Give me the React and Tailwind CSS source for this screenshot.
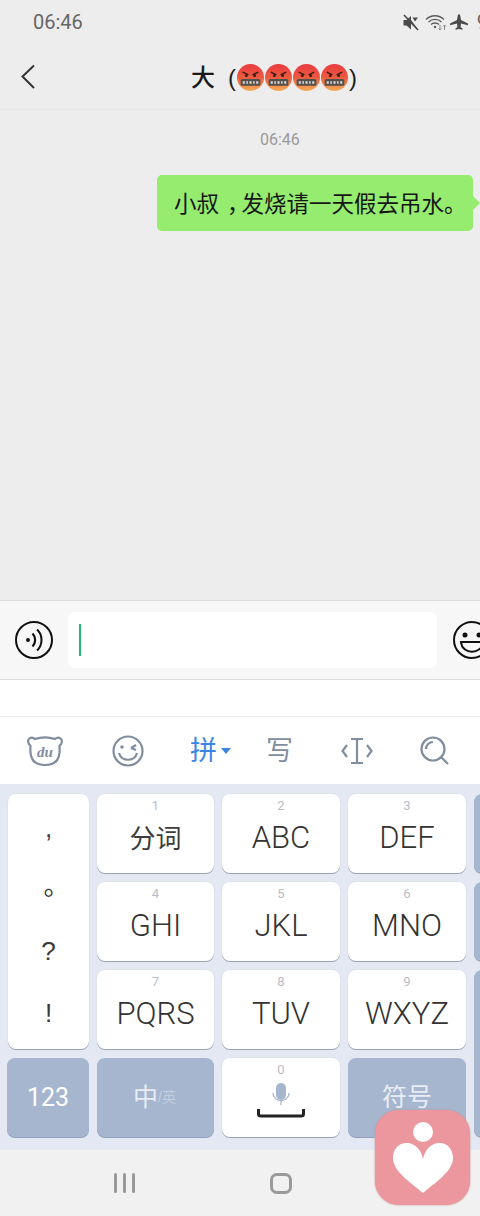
const CJK = { fontFamily: '"Liberation Sans","Noto Sans CJK SC",sans-serif' };
const ROBOTO = { fontFamily: 'Roboto,"Noto Sans CJK SC",sans-serif' };

function AngryFace({ id }) {
  return (
    <svg width="27" height="27" viewBox="0 0 26 26" className="shrink-0">
      <defs>
        <linearGradient id={id} x1="0" y1="0" x2="0" y2="1">
          <stop offset="0" stopColor="#ea3a40" />
          <stop offset="0.5" stopColor="#ec5a40" />
          <stop offset="1" stopColor="#f4ad55" />
        </linearGradient>
      </defs>
      <circle cx="13" cy="13" r="13" fill={`url(#${id})`} />
      <path d="M6 8 L10.5 10.2 M20 8 L15.5 10.2" stroke="#3d1c14" strokeWidth="1.4" strokeLinecap="round" />
      <circle cx="9" cy="11.2" r="1.4" fill="#3d1c14" />
      <circle cx="17" cy="11.2" r="1.4" fill="#3d1c14" />
      <rect x="3.5" y="14.5" width="19" height="6.5" rx="1.5" fill="#54504c" />
      <path d="M5.5 16.5 h2 v2.5 h-2z M9 16.5 h1.5 v2.5 h-1.5z M12 16.5 h2 v2.5 h-2z M15.5 16.5 h1.5 v2.5 h-1.5z M18.5 16.5 h2 v2.5 h-2z" fill="#dedad6" />
    </svg>
  );
}

function Key({ num, children }) {
  return (
    <div style={ROBOTO} className="relative flex flex-col items-center rounded-lg bg-white shadow-[0_1px_0_#98a3b8,0_0_0_1px_#dfe3ee]">
      <span className="mt-[4px] h-4 text-[13px] leading-4 text-[#b9bdc8]">{num}</span>
      <span className="mt-[6px] text-[31px] font-light leading-9 text-[#333]">{children}</span>
    </div>
  );
}

function Dark({ children, className = "" }) {
  return (
    <div className={`flex items-center justify-center rounded-lg bg-[#a6b6cf] shadow-[0_1px_0_#8f9fbb] ${className}`}>
      {children}
    </div>
  );
}

export default function App() {
  return (
    <div style={CJK} className="relative flex h-[1216px] w-[480px] flex-col overflow-hidden bg-[#ededed]">
      {/* status bar */}
      <div className="flex h-[44px] shrink-0 items-center overflow-hidden pl-[33px]">
        <span style={ROBOTO} className="text-[20px] text-[#666]">06:46</span>
        <div className="ml-[320px] flex items-center">
          <svg width="16" height="17" viewBox="0 0 16 17" fill="#4a4a4a">
            <path d="M0.5 6 h3 l4.5 -4 v4 l6 8 l-0.5 0.5 l-5.5 -5 v6 l-4.5 -4 h-3z M9.5 3.5 l5.5 0 l-3 4z" />
            <path d="M1 1 L15 16" stroke="#4a4a4a" strokeWidth="1.6" />
          </svg>
          <svg width="22" height="17" viewBox="0 0 22 17" fill="none" stroke="#5a5a5a" strokeWidth="1.3" className="ml-[6px]">
            <path d="M1 5.5 C6 0.5 14 0.5 19 5.5" />
            <path d="M3.5 8 C7 4.5 13 4.5 16.5 8" />
            <path d="M6 10.5 C8 8.5 12 8.5 14 10.5" />
            <circle cx="10" cy="13" r="1.2" fill="#5a5a5a" stroke="none" />
            <path d="M15 11 v5 M13.5 14.5 L15 16 L16.5 14.5 M19.5 16 v-5 M18 12.5 L19.5 11 L21 12.5" stroke="#8a8a8a" strokeWidth="1" />
          </svg>
          <svg width="18" height="17" viewBox="0 0 18 17" fill="#4a4a4a" className="ml-[3px]">
            <path d="M8 0.5 h2 l1 5.5 l7 3.5 v1.8 l-7 -1.8 l-0.5 3.5 l2 1.5 v1.2 l-3.5 -0.8 l-3.5 0.8 v-1.2 l2 -1.5 l-0.5 -3.5 l-7 1.8 v-1.8 l7 -3.5z" />
          </svg>
          <span style={ROBOTO} className="ml-[9px] text-[20px] text-[#666]">9</span>
        </div>
      </div>

      {/* header */}
      <div className="flex h-[66px] shrink-0 items-center border-b border-[#e6e6e6] bg-[#ededed]">
        <svg width="16" height="26" viewBox="0 0 16 26" fill="none" stroke="#333" strokeWidth="2" className="ml-[20px]">
          <path d="M14 1.5 L2.5 12.5 L14 24" />
        </svg>
        <div className="ml-[155px] flex items-center pt-[2px] text-[24px] leading-8 text-[#1a1a1a]">
          <span className="w-[37px] font-medium">大</span>
          <span className="w-[9px] text-[#222]">(</span>
          <div className="flex gap-[1px]">
            <AngryFace id="f1" />
            <AngryFace id="f2" />
            <AngryFace id="f3" />
            <AngryFace id="f4" />
          </div>
          <span className="ml-[1px] text-[#222]">)</span>
        </div>
      </div>

      {/* chat */}
      <div className="flex flex-1 flex-col items-end">
        <div style={ROBOTO} className="mt-[20px] w-full pl-[260px] text-[16px] leading-5 text-[#9a9a9a]">06:46</div>
        <div className="relative mr-[7px] mt-[25px] flex h-[56px] w-[316px] items-center rounded-[5px] bg-[#95ec6e] pl-[17px] pt-[4px] text-[22.5px] text-[#161616] whitespace-nowrap">
          <span>小叔</span>
          <span className="ml-[8px] tracking-[-8px]">，</span>
          <span>发烧请一天假去吊水。</span>
          <div className="absolute -right-[7px] top-[21px] h-0 w-0 border-y-[7px] border-l-[7px] border-y-transparent border-l-[#95ec6e]" />
        </div>
      </div>

      {/* input */}
      <div className="flex h-[80px] shrink-0 items-center overflow-hidden border-y border-[#dcdcdc] bg-[#f7f7f7] pl-[15px]">
        <svg width="38" height="38" viewBox="0 0 38 38" fill="none" stroke="#111" strokeWidth="2" className="shrink-0">
          <circle cx="19" cy="19" r="18" />
          <circle cx="13" cy="19" r="2" fill="#111" stroke="none" />
          <path d="M17.5 12.5 C21 16 21 22 17.5 25.5" strokeWidth="2.2" />
          <path d="M22 8.5 C28 14 28 24 22 29.5" strokeWidth="2" />
        </svg>
        <div className="ml-[15px] flex h-[56px] w-[369px] shrink-0 items-center rounded-md bg-white pl-[11px]">
          <div className="h-[32px] w-[2px] bg-[#1fb871]" />
        </div>
        <svg width="38" height="38" viewBox="0 0 38 38" fill="none" stroke="#111" strokeWidth="2" className="ml-[16px] shrink-0">
          <circle cx="19" cy="19" r="18" />
          <circle cx="12" cy="14" r="2.5" fill="#111" stroke="none" />
          <circle cx="26" cy="14" r="2.5" fill="#111" stroke="none" />
          <path d="M8 21 H30 C29 34 9 34 8 21Z" />
        </svg>
      </div>

      {/* white strip */}
      <div className="h-[37px] shrink-0 border-b border-[#ececec] bg-white" />

      {/* toolbar */}
      <div className="relative flex h-[67px] shrink-0 items-center bg-white text-[#7f8d9f]">
        <svg width="36" height="32" viewBox="0 0 36 32" fill="none" stroke="#7f8d9f" strokeWidth="2.2" className="ml-[27px]">
          <path d="M8 4 C4 1 0 4 1.5 8 C2 10 3.5 10.5 3.5 11 C2.5 23 6 30 18 30 C30 30 33.5 23 32.5 11 C32.5 10.5 34 10 34.5 8 C36 4 32 1 28 4 C22 2 14 2 8 4Z" />
          <text x="18" y="22" textAnchor="middle" stroke="none" fill="#7f8d9f" fontSize="15" fontStyle="italic" fontWeight="700" fontFamily="Liberation Serif, serif">du</text>
        </svg>
        <svg width="32" height="32" viewBox="0 0 32 32" fill="none" stroke="#7f8d9f" strokeWidth="2.2" className="ml-[49px]">
          <circle cx="16" cy="16" r="14.5" />
          <circle cx="10" cy="12" r="1.8" fill="#7f8d9f" stroke="none" />
          <path d="M19 13 L24 10 M19 13 L24 15" />
          <path d="M7 18 C9 27 23 27 25 18" />
        </svg>
        <span className="ml-[46px] text-[27px] leading-8 text-[#3b86e2]">拼</span>
        <div className="ml-[4px] h-0 w-0 border-x-[5px] border-t-[6px] border-x-transparent border-t-[#3b86e2]" />
        <span className="ml-[35px] text-[27px] leading-8">写</span>
        <svg width="32" height="28" viewBox="0 0 32 28" fill="none" stroke="#7f8d9f" strokeWidth="2.2" className="ml-[48px]">
          <path d="M6 8 L1.5 14 L6 20 M26 8 L30.5 14 L26 20 M10 2 H22 M16 2 V26 M10 26 H22" />
        </svg>
        <svg width="30" height="30" viewBox="0 0 30 30" fill="none" stroke="#7f8d9f" strokeWidth="2.2" className="ml-[47px]">
          <circle cx="13" cy="13" r="11.5" />
          <path d="M6 13 C6 9 9 6 13 6 M21 21 L28 28" />
        </svg>
      </div>

      {/* keyboard */}
      <div className="h-[366px] shrink-0 overflow-hidden bg-[#e4e8f3] pl-[8px] pt-[10px]">
        <div className="grid w-[500px] grid-cols-[81px_117px_118px_118px_30px] grid-rows-[79px_79px_79px_79px] gap-x-[8px] gap-y-[9px]">
          <div className="row-span-3 grid grid-rows-4 justify-items-center rounded-lg bg-white text-[26px] leading-none text-[#3a3a3a] shadow-[0_1px_0_#98a3b8,0_0_0_1px_#dfe3ee]">
            <span className="translate-y-[2px] self-center">,</span>
            <span className="translate-x-[8px] -translate-y-[4px] self-center">。</span>
            <span className="-translate-y-[2px] self-center">?</span>
            <span className="-translate-y-[4px] self-center">!</span>
          </div>
          <Key num="1"><span className="text-[26px] font-normal text-[#3c3c3c]">分词</span></Key>
          <Key num="2">ABC</Key>
          <Key num="3">DEF</Key>
          <Dark />
          <Key num="4">GHI</Key>
          <Key num="5">JKL</Key>
          <Key num="6">MNO</Key>
          <Dark />
          <Key num="7">PQRS</Key>
          <Key num="8">TUV</Key>
          <Key num="9">WXYZ</Key>
          <Dark className="row-span-2" />
          <Dark className="-ml-[1px] text-[25px] text-white"><span style={ROBOTO}>123</span></Dark>
          <Dark className="pr-[2px] text-[25px] text-[#e8edf5]">
            <span>中</span>
            <span className="text-[14px] text-[#c3cede]">/英</span>
          </Dark>
          <div style={ROBOTO} className="relative flex flex-col items-center rounded-lg bg-white shadow-[0_1px_0_#98a3b8,0_0_0_1px_#dfe3ee]">
            <span className="mt-[4px] h-4 text-[13px] leading-4 text-[#b9bdc8]">0</span>
            <svg width="18" height="24" viewBox="0 0 18 24" fill="none" className="mt-[5px]">
              <rect x="4" y="0" width="10" height="17" rx="5" fill="#a6b6cf" />
              <path d="M1 10 C1 20 17 20 17 10 M9 18 V22" stroke="#a6b6cf" strokeWidth="1.3" />
            </svg>
            <svg width="48" height="10" viewBox="0 0 48 10" fill="none" stroke="#222" strokeWidth="3" className="mt-[1px]">
              <path d="M1.5 1 V6 Q1.5 8 4 8 H44 Q46.5 8 46.5 6 V1" />
            </svg>
          </div>
          <Dark className="text-[25px] text-[#e8edf5]">符号</Dark>
        </div>
      </div>

      {/* nav */}
      <div className="relative flex h-[66px] shrink-0 items-center bg-[#f1f1f1]">
        <div className="ml-[114px] flex gap-[6px]">
          <div className="h-[20px] w-[3px] rounded-sm bg-[#9a9a9a]" />
          <div className="h-[20px] w-[3px] rounded-sm bg-[#9a9a9a]" />
          <div className="h-[20px] w-[3px] rounded-sm bg-[#9a9a9a]" />
        </div>
        <div className="ml-[135px] h-[21px] w-[22px] rounded-[7px] border-[3px] border-[#9a9a9a]" />
      </div>

      {/* floating app badge */}
      <div className="absolute left-[375px] top-[1110px] flex h-[95px] w-[95px] items-center justify-center rounded-[24px] bg-[#ec979d] shadow-[0_0_2px_#c9878c]">
        <svg width="62" height="72" viewBox="0 0 62 72" fill="white">
          <circle cx="31" cy="10" r="10" />
          <path d="M31 71 C18 60 1 49 1 36 C1 26 8 20 16 21 C24 22 29 28 31 37 C33 28 38 22 46 21 C54 20 61 26 61 36 C61 49 44 60 31 71Z" />
        </svg>
      </div>
    </div>
  );
}
